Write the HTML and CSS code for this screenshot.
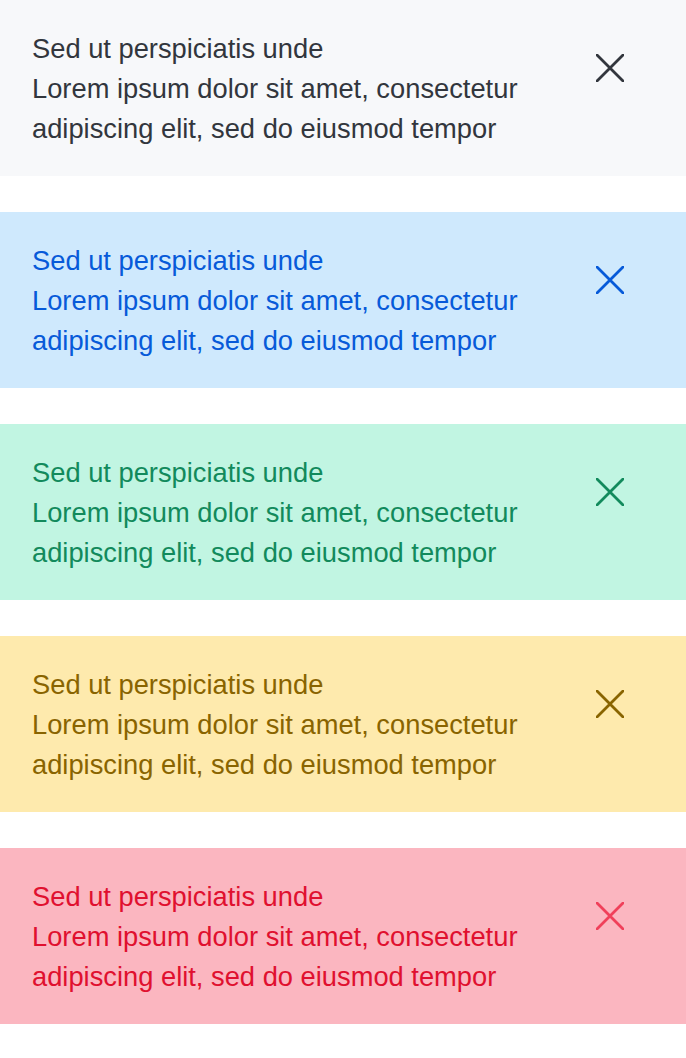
FILE: index.html
```html
<!DOCTYPE html>
<html lang="en">
<head>
<meta charset="utf-8">
<title>Alerts</title>
<link rel="stylesheet" href="styles.css">
</head>
<body>
<div class="stack">
  <div class="alert alert-gray">
    <p class="msg">Sed ut perspiciatis unde<br>Lorem ipsum dolor sit amet, consectetur adipiscing elit, sed do eiusmod tempor</p>
    <button class="close" aria-label="Close"><svg viewBox="0 0 28 28" width="28" height="28"><path d="M1 1L27 27M27 1L1 27"/></svg></button>
  </div>
  <div class="alert alert-blue">
    <p class="msg">Sed ut perspiciatis unde<br>Lorem ipsum dolor sit amet, consectetur adipiscing elit, sed do eiusmod tempor</p>
    <button class="close" aria-label="Close"><svg viewBox="0 0 28 28" width="28" height="28"><path d="M1 1L27 27M27 1L1 27"/></svg></button>
  </div>
  <div class="alert alert-green">
    <p class="msg">Sed ut perspiciatis unde<br>Lorem ipsum dolor sit amet, consectetur adipiscing elit, sed do eiusmod tempor</p>
    <button class="close" aria-label="Close"><svg viewBox="0 0 28 28" width="28" height="28"><path d="M1 1L27 27M27 1L1 27"/></svg></button>
  </div>
  <div class="alert alert-yellow">
    <p class="msg">Sed ut perspiciatis unde<br>Lorem ipsum dolor sit amet, consectetur adipiscing elit, sed do eiusmod tempor</p>
    <button class="close" aria-label="Close"><svg viewBox="0 0 28 28" width="28" height="28"><path d="M1 1L27 27M27 1L1 27"/></svg></button>
  </div>
  <div class="alert alert-red">
    <p class="msg">Sed ut perspiciatis unde<br>Lorem ipsum dolor sit amet, consectetur adipiscing elit, sed do eiusmod tempor</p>
    <button class="close" aria-label="Close"><svg viewBox="0 0 28 28" width="28" height="28"><path d="M1 1L27 27M27 1L1 27"/></svg></button>
  </div>
</div>
</body>
</html>
```
FILE: styles.css
```css
html, body {
  margin: 0;
  padding: 0;
  background: #ffffff;
}
body {
  font-family: "Liberation Sans", Arial, Helvetica, sans-serif;
}
.stack {
  display: flex;
  flex-direction: column;
  gap: 36px;
}
.alert {
  display: flex;
  align-items: flex-start;
  height: 176px;
  box-sizing: border-box;
  padding: 29px 62px 0 32px;
}
.msg {
  margin: 0;
  flex: 1;
  font-size: 27.3px;
  line-height: 40px;
  max-width: 520px;
}
.close {
  margin: 25px 0 0 auto;
  padding: 0;
  border: 0;
  background: transparent;
  width: 28px;
  height: 28px;
  display: block;
  color: inherit;
}
.close svg {
  display: block;
}
.close path {
  fill: none;
  stroke: currentColor;
  stroke-width: 2.8;
  stroke-linecap: round;
}
.alert-gray { background: #f7f8fa; color: #32363d; }
.alert-blue { background: #cfe9fd; color: #075ad9; }
.alert-green { background: #c1f5e2; color: #128a5c; }
.alert-yellow { background: #feeaad; color: #896400; }
.alert-red { background: #fbb6c0; color: #e0102f; }
.alert-red .close { color: #f0405a; }
```
